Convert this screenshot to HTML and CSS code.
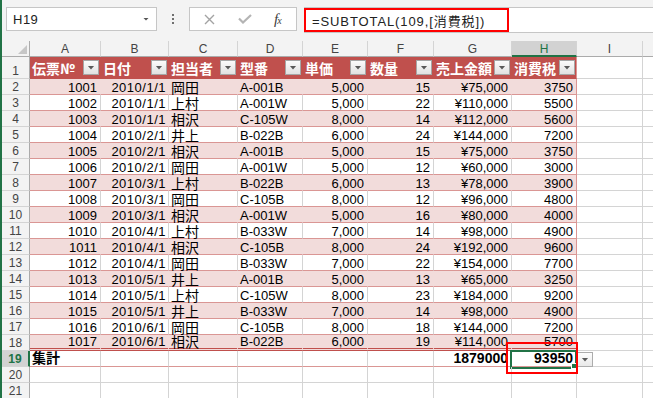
FILE: index.html
```html
<!DOCTYPE html>
<html lang="ja">
<head>
    <meta charset="UTF-8">
    <meta name="viewport" content="width=device-width, initial-scale=1.0">
    <title>SUBTOTAL 集計行</title>
    <link rel="stylesheet" href="styles.css">
</head>
<body>
    <div class="window">
        <!-- Name box / formula bar -->
        <div class="formula-bar">
            <div class="name-box">
                <span class="name">H19</span>
                <span class="caret"></span>
            </div>
            <div class="grip"><i></i><i></i><i></i></div>
            <div class="fx-buttons">
                <svg class="btn-cancel" width="11" height="11" viewBox="0 0 11 11">
                    <path d="M1 1L10 10M10 1L1 10" stroke="#a3a3a3" stroke-width="1.4" fill="none"/>
                </svg>
                <svg class="btn-enter" width="14" height="10" viewBox="0 0 14 10">
                    <path d="M1 4.5L5 8.5L13 1" stroke="#b4b4b4" stroke-width="2.2" fill="none"/>
                </svg>
                <span class="fx">f<sub>x</sub></span>
            </div>
            <div class="formula">
                <span class="formula-text">=SUBTOTAL(109,[消費税])</span>
            </div>
        </div>

        <!-- Worksheet -->
        <div class="sheet" id="sheet"></div>
    </div>

    <script>
        document.addEventListener("DOMContentLoaded", function() {
            var sheet = document.getElementById("sheet");

            var cols = ["A", "B", "C", "D", "E", "F", "G", "H", "I", "J"];
            var heads = ["伝票№", "日付", "担当者", "型番", "単価", "数量", "売上金額", "消費税"];

            // 伝票No, 日付, 担当者, 型番, 単価, 数量, 売上金額, 消費税
            var data = [
                [1001, "2010/1/1", "岡田", "A-001B", "5,000", 15, "¥75,000", 3750],
                [1002, "2010/1/1", "上村", "A-001W", "5,000", 22, "¥110,000", 5500],
                [1003, "2010/1/1", "相沢", "C-105W", "8,000", 14, "¥112,000", 5600],
                [1004, "2010/2/1", "井上", "B-022B", "6,000", 24, "¥144,000", 7200],
                [1005, "2010/2/1", "相沢", "A-001B", "5,000", 15, "¥75,000", 3750],
                [1006, "2010/2/1", "岡田", "A-001W", "5,000", 12, "¥60,000", 3000],
                [1007, "2010/3/1", "上村", "B-022B", "6,000", 13, "¥78,000", 3900],
                [1008, "2010/3/1", "岡田", "C-105B", "8,000", 12, "¥96,000", 4800],
                [1009, "2010/3/1", "相沢", "A-001W", "5,000", 16, "¥80,000", 4000],
                [1010, "2010/4/1", "上村", "B-033W", "7,000", 14, "¥98,000", 4900],
                [1011, "2010/4/1", "相沢", "C-105B", "8,000", 24, "¥192,000", 9600],
                [1012, "2010/4/1", "岡田", "B-033W", "7,000", 22, "¥154,000", 7700],
                [1013, "2010/5/1", "井上", "A-001B", "5,000", 13, "¥65,000", 3250],
                [1014, "2010/5/1", "上村", "C-105W", "8,000", 23, "¥184,000", 9200],
                [1015, "2010/5/1", "井上", "B-033W", "7,000", 14, "¥98,000", 4900],
                [1016, "2010/6/1", "岡田", "C-105B", "8,000", 18, "¥144,000", 7200],
                [1017, "2010/6/1", "相沢", "B-022B", "6,000", 19, "¥114,000", 5700]
            ];

            // column kinds: text columns are left aligned
            var kinds = ["num", "num date", "jp", "txt", "num", "num", "num", "num"];

            var html = "";

            // column letters
            html += '<div class="row col-heads"><div class="corner"><span class="corner-tri"></span></div>';
            cols.forEach(function(c) {
                html += '<div class="ch' + (c === "H" ? " active" : "") + '">' + (c === "J" ? "" : c) + '</div>';
            });
            html += '</div>';

            // table header row
            html += '<div class="row head-row"><div class="rh">1</div>';
            heads.forEach(function(h, i) {
                html += '<div class="c t-head' + (i === 7 ? " t-right" : "") + '"><span>' + h + '</span><span class="filter"></span></div>';
            });
            html += '<div class="c"></div><div class="c last"></div></div>';

            // data rows
            data.forEach(function(r, i) {
                var cls = i % 2 === 0 ? "band" : "plain";
                if (i === data.length - 1) cls += " t-end";
                html += '<div class="row"><div class="rh">' + (i + 2) + '</div>';
                r.forEach(function(v, j) {
                    html += '<div class="c ' + kinds[j] + ' ' + cls + (j === 7 ? " t-right" : "") + '">' + v + '</div>';
                });
                html += '<div class="c"></div><div class="c last"></div></div>';
            });

            // total row
            html += '<div class="row total-row"><div class="rh active">19</div>';
            html += '<div class="c jp bold t-total">集計</div>';
            for (var k = 0; k < 5; k++) html += '<div class="c t-total"></div>';
            html += '<div class="c num bold t-total">1879000</div>';
            html += '<div class="c num bold t-total t-right selected">93950<span class="sel-box"></span><span class="fill-handle"></span><span class="callout"></span></div>';
            html += '<div class="c drop-cell"><span class="filter"></span></div><div class="c last"></div></div>';

            // empty rows
            [20, 21].forEach(function(n) {
                html += '<div class="row"><div class="rh">' + n + '</div>';
                for (var m = 0; m < 9; m++) html += '<div class="c"></div>';
                html += '<div class="c last"></div></div>';
            });

            sheet.innerHTML = html;
        });
    </script>
</body>
</html>
```

FILE: styles.css
```css
body {
    margin: 0;
    padding: 0;
    background-color: #fff;
    overflow: hidden;
    font-family: "Liberation Sans", "Noto Sans CJK JP", sans-serif;
}

.window {
    border-left: 2px solid #217346;
    height: 398px;
    box-sizing: border-box;
}

/* Formula bar */
.formula-bar {
    display: flex;
    align-items: flex-start;
    height: 41px;
    padding-top: 7px;
    box-sizing: border-box;
    background-color: #f3f3f3;
}

.name-box {
    display: flex;
    align-items: center;
    width: 151px;
    height: 24px;
    margin-left: 4px;
    padding-left: 6px;
    box-sizing: border-box;
    background-color: #fff;
    border: 1px solid #c6c6c6;
}

.name {
    font-size: 13px;
    letter-spacing: 0.5px;
    color: #222;
}

.caret {
    margin-left: auto;
    margin-right: 7px;
    width: 6px;
    height: 3px;
    background-color: #555;
    clip-path: polygon(0 0, 100% 0, 50% 100%);
}

.grip {
    width: 32px;
    height: 24px;
    display: flex;
    flex-direction: column;
    align-items: center;
    justify-content: center;
    gap: 2px;
}

.grip i {
    display: block;
    width: 2px;
    height: 2px;
    background-color: #6f6f6f;
}

.fx-buttons {
    display: flex;
    align-items: center;
    width: 108px;
    height: 24px;
    box-sizing: border-box;
    background-color: #fff;
    border: 1px solid #c6c6c6;
}

.btn-cancel {
    margin-left: 14px;
}

.btn-enter {
    margin-left: 23px;
}

.fx {
    margin-left: 22px;
    font-family: "Liberation Serif", serif;
    font-style: italic;
    font-size: 15px;
    color: #404040;
    line-height: 1;
}

.fx sub {
    font-size: 10px;
    vertical-align: 0;
    margin-left: -1px;
}

.formula {
    flex: 1;
    display: flex;
    height: 26px;
    margin-left: 7px;
    box-sizing: border-box;
    background-color: #fff;
    border-top: 1px solid #c6c6c6;
    border-bottom: 1px solid #c6c6c6;
}

.formula-text {
    display: flex;
    align-items: center;
    width: 205px;
    padding-left: 6px;
    box-sizing: border-box;
    border: 2px solid #ff0000;
    font-size: 13px;
    letter-spacing: 0.9px;
    color: #222;
}

/* Worksheet grid */
.row {
    display: grid;
    grid-template-columns: 28px 71px 68px 69px 65px 65px 66px 78px 65px 66px 1fr;
    grid-template-rows: 16px;
    height: 16px;
}

.head-row {
    grid-template-rows: 22px;
    height: 22px;
}

.c {
    position: relative;
    box-sizing: border-box;
    border-right: 1px solid #d4d4d4;
    border-bottom: 1px solid #d4d4d4;
    padding: 3px 3px 0 2px;
    font-size: 13px;
    line-height: 12px;
    color: #000;
    white-space: nowrap;
}

.c.last {
    border-right: none;
}

.num {
    text-align: right;
}

.date {
    letter-spacing: 0.5px;
    padding-right: 2px;
}

.jp {
    font-family: "Noto Sans CJK JP", sans-serif;
    font-size: 14px;
    padding-top: 2px;
}

.bold {
    font-weight: bold;
    font-size: 14px;
}

/* headers */
.corner,
.ch,
.rh {
    box-sizing: border-box;
    background-color: #f3f3f3;
    border-right: 1px solid #d4d4d4;
    border-bottom: 1px solid #d4d4d4;
    color: #444;
    font-size: 12px;
    text-align: center;
}

.corner {
    position: relative;
    border-bottom-color: #ababab;
    border-right-color: #ababab;
}

.corner-tri {
    position: absolute;
    right: 2px;
    bottom: 2px;
    width: 9px;
    height: 9px;
    background-color: #c6c6c6;
    clip-path: polygon(100% 0, 100% 100%, 0 100%);
}

.ch {
    line-height: 15px;
    padding-top: 1px;
    border-bottom-color: #ababab;
}

.ch:last-child {
    border-right: none;
}

.ch.active {
    background-color: #d2d2d2;
    color: #217346;
    border-bottom: 2px solid #217346;
}

.rh {
    line-height: 15px;
    padding-top: 1px;
    border-right-color: #ababab;
}

.head-row .rh {
    padding-top: 7px;
}

.rh.active {
    background-color: #d2d2d2;
    color: #217346;
    font-weight: bold;
    border-right: 2px solid #217346;
}

/* Table style */
.t-head {
    display: flex;
    align-items: center;
    justify-content: space-between;
    padding: 0 0 0 2px;
    background-color: #c0504d;
    border-right-color: #c0504d;
    border-bottom-color: #c0504d;
    color: #fff;
    font-family: "Noto Sans CJK JP", sans-serif;
    font-weight: bold;
    font-size: 14px;
    line-height: 1;
}

.filter {
    display: flex;
    align-items: center;
    justify-content: center;
    width: 16px;
    height: 15px;
    margin-right: 1px;
    box-sizing: border-box;
    border: 1px solid #a6a6a6;
    background: linear-gradient(#fbfbfb, #e1e1e1);
}

.filter::after {
    content: "";
    width: 7px;
    height: 4px;
    background-color: #595959;
    clip-path: polygon(0 0, 100% 0, 50% 100%);
}

.band {
    background-color: #f2dcdb;
    border-right-color: #f2dcdb;
    border-bottom-color: #da9694;
}

.plain {
    border-bottom-color: #da9694;
}

.t-end {
    border-bottom: 3px double #c0504d;
    padding-top: 1px;
}

.jp.t-end {
    padding-top: 0;
}

.t-right {
    border-right-color: #da9694;
}

.t-total {
    border-bottom-color: #da9694;
    padding-top: 1px;
}

.jp.t-total {
    padding-top: 0;
}

/* selected cell with annotation */
.sel-box {
    position: absolute;
    left: -2px;
    top: -1px;
    width: 67px;
    height: 19px;
    box-sizing: border-box;
    border: 2px solid #217346;
}

.fill-handle {
    position: absolute;
    right: -1px;
    bottom: -3px;
    width: 4px;
    height: 4px;
    background-color: #217346;
    border: 1px solid #fff;
}

.callout {
    position: absolute;
    left: -6px;
    top: -9px;
    width: 72px;
    height: 32px;
    box-sizing: border-box;
    border: 2px solid #ff0000;
    z-index: 2;
}

.drop-cell {
    padding: 1px 0 0 0;
}

.drop-cell .filter {
    background: linear-gradient(#fdfdfd, #e8e8e8);
    border-color: #acacac;
}
```
